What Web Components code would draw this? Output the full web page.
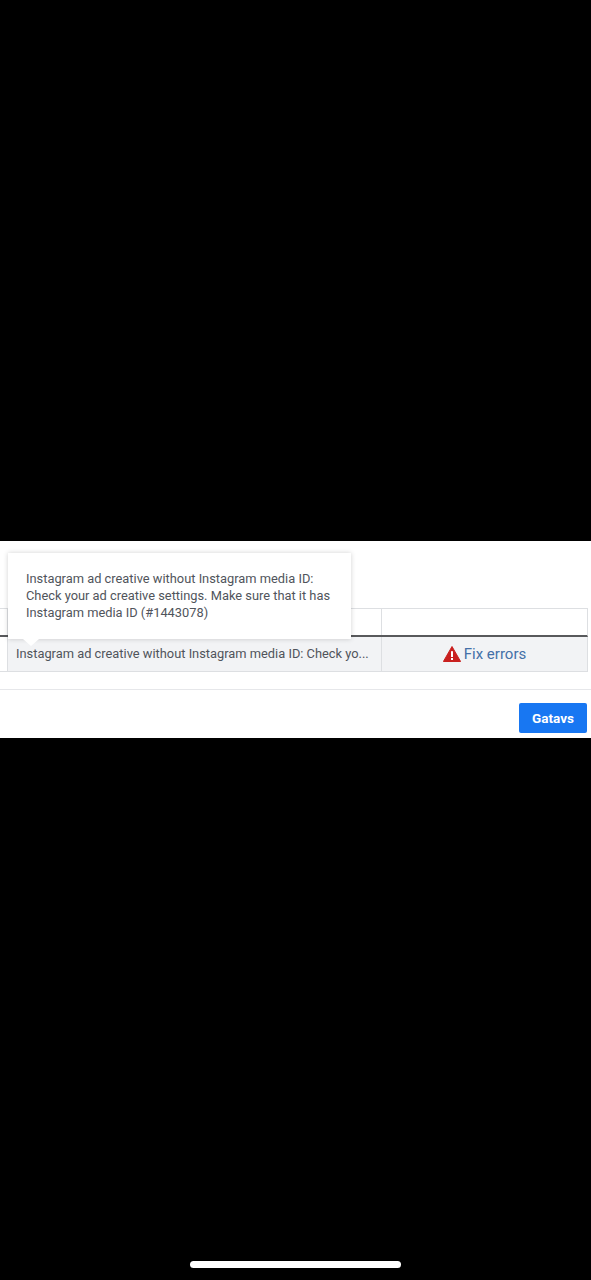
<!DOCTYPE html>
<html>
<head>
<meta charset="utf-8">
<style>
  html, body { margin: 0; background: #000; }
  body { width: 591px; height: 1280px; overflow: hidden; font-family: Roboto, "Liberation Sans", sans-serif; display: flex; flex-direction: column; }
</style>
</head>
<body>
<error-dialog>
  <error-table slot="table"></error-table>
  <blue-button slot="footer">Gatavs</blue-button>
</error-dialog>
<home-bar></home-bar>

<script>
class ErrorDialog extends HTMLElement {
  constructor() {
    super();
    this.attachShadow({ mode: 'open' }).innerHTML = `
      <style>
        :host { display: block; margin-top: 541px; height: 197px; background: #fff; position: relative; }
        .top { height: 67px; }
        .foot {
          margin-top: 17px;
          border-top: 1px solid #e6e7ea;
          padding: 13px 4px 0 0;
          display: flex;
          justify-content: flex-end;
        }
      </style>
      <div class="top"></div>
      <slot name="table"></slot>
      <div class="foot"><slot name="footer"></slot></div>
    `;
  }
}

class ErrorTable extends HTMLElement {
  constructor() {
    super();
    this.attachShadow({ mode: 'open' }).innerHTML = `
      <style>
        :host { display: block; margin-right: 3px; position: relative; color: #50545b; font-size: 12.85px; }
        .head, .row { display: grid; grid-template-columns: 7px 374px 1fr; }
        .head { height: 26px; border-top: 1px solid #dddfe2; border-right: 1px solid #dddfe2; border-bottom: 2px solid #58595b; }
        .head div + div { border-left: 1px solid #dddfe2; }
        .row { height: 34px; background: #f2f3f5; border-bottom: 1px solid #dddfe2; border-right: 1px solid #dddfe2; }
        .row > div { display: flex; align-items: center; min-width: 0; }
        .row > div + div { border-left: 1px solid #dddfe2; }
        .msg { padding: 0 0 2px 8px; white-space: nowrap; }
        .fix { justify-content: center; gap: 3px; color: #4470a8; font-size: 15px; padding: 0 0 1px 0; }
        .fix svg { width: 18px; height: 16px; display: block; }
        .row > div:first-child { background: #fff; }
        error-tip { position: absolute; left: 8px; top: -55px; }
      </style>
      <div class="head"><div></div><div></div><div></div></div>
      <div class="row">
        <div></div>
        <div class="msg"><span>Instagram ad creative without Instagram media ID: Check yo...</span></div>
        <div class="fix">
          <svg viewBox="0 0 18 16"><path d="M9 .5 17.6 15.5H.4Z" fill="#c9201f" stroke="#c9201f" stroke-linejoin="round"/><rect x="8" y="5.2" width="2" height="5.8" fill="#fff"/><rect x="8" y="12" width="2" height="2" fill="#fff"/></svg>
          <span>Fix errors</span>
        </div>
      </div>
      <error-tip>Instagram ad creative without Instagram media ID: Check your ad creative settings. Make sure that it has Instagram media ID (#1443078)</error-tip>
    `;
  }
}

class ErrorTip extends HTMLElement {
  constructor() {
    super();
    this.attachShadow({ mode: 'open' }).innerHTML = `
      <style>
        :host { display: block; width: 343px; height: 86px; box-sizing: border-box; padding: 17px 18px 0; background: #fff; color: #50545b; font-size: 12.85px; line-height: 17px; box-shadow: 0 0 5px rgba(0,0,0,.18); }
        .arrow { position: absolute; left: 15px; bottom: -7px; width: 0; height: 0; border-left: 8px solid transparent; border-right: 8px solid transparent; border-top: 7px solid #fff; }
      </style>
      <slot></slot>
      <div class="arrow"></div>
    `;
  }
}

class BlueButton extends HTMLElement {
  constructor() {
    super();
    this.attachShadow({ mode: 'open' }).innerHTML = `
      <style>
        :host { display: flex; align-items: center; justify-content: center; width: 68px; height: 30px; background: #1877f2; color: #fff; font-size: 13.5px; font-weight: 700; border-radius: 2px; }
      </style>
      <slot></slot>
    `;
  }
}

class HomeBar extends HTMLElement {
  constructor() {
    super();
    this.attachShadow({ mode: 'open' }).innerHTML = `
      <style>
        :host { display: block; width: 211px; height: 7px; margin: 523px auto 0; background: #fff; border-radius: 4px; }
      </style>
    `;
  }
}

customElements.define('error-tip', ErrorTip);
customElements.define('error-table', ErrorTable);
customElements.define('error-dialog', ErrorDialog);
customElements.define('blue-button', BlueButton);
customElements.define('home-bar', HomeBar);
</script>
</body>
</html>
